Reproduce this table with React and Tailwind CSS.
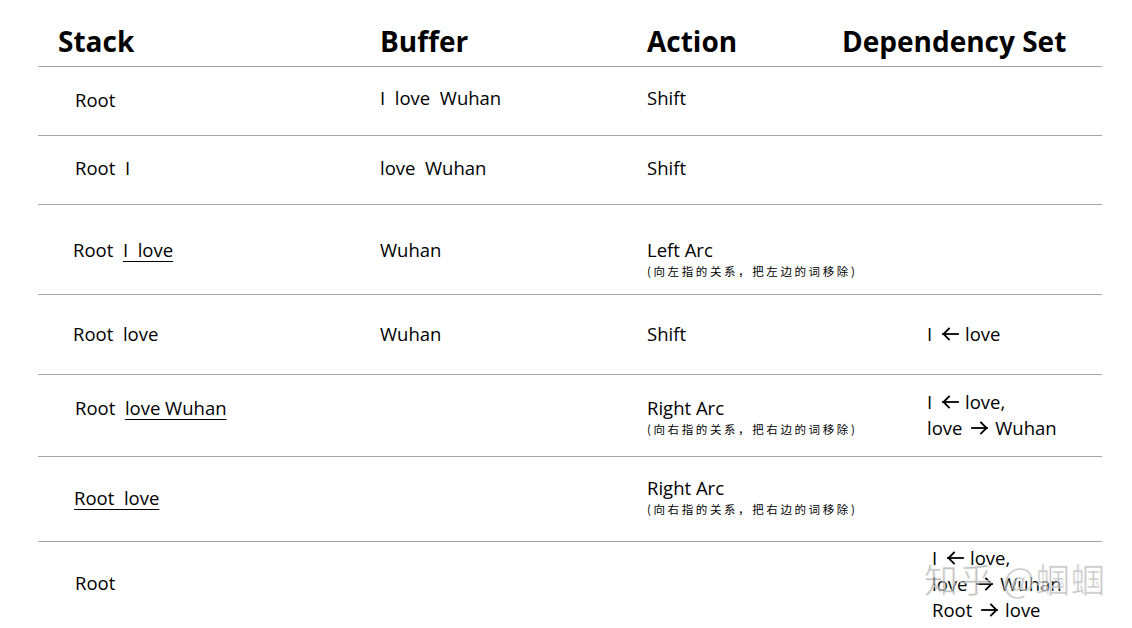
import React from "react";

const body = { fontFamily: '"Open Sans", "Noto Sans", sans-serif' };
const cjk = { fontFamily: '"Noto Sans CJK SC", "Noto Sans", sans-serif' };

function Note({ children }) {
  return (
    <div className="text-[11.5px] leading-[16px] tracking-[2.6px] text-black" style={cjk}>
      {children}
    </div>
  );
}

function Arrow({ dir }) {
  return (
    <svg
      width="18"
      height="14"
      viewBox="0 0 18 14"
      className="inline-block ml-[4px] mr-[6px] align-baseline"
      fill="none"
      stroke="black"
      strokeWidth="1.8"
      strokeLinecap="square"
    >
      {dir === "left" ? (
        <>
          <path d="M2 7 H17" />
          <path d="M8 1.5 L2.5 7 L8 12.5" />
        </>
      ) : (
        <>
          <path d="M1 7 H16" />
          <path d="M10 1.5 L15.5 7 L10 12.5" />
        </>
      )}
    </svg>
  );
}

export default function App() {
  return (
    <div className="w-[1132px] h-[628px] bg-white overflow-hidden relative text-black" style={body}>
      <div className="ml-[38px] w-[1064px]">
        {/* header */}
        <div className="h-[67px] border-b border-[#a6a6a6] grid grid-cols-[322px_267px_195px_1fr] pl-[20px] pt-[25px] text-[28px] leading-[32px] font-bold">
          <div>Stack</div>
          <div>Buffer</div>
          <div>Action</div>
          <div>Dependency Set</div>
        </div>

        {/* row 1 */}
        <div className="h-[69px] border-b border-[#a6a6a6] grid grid-cols-[342px_267px_280px_1fr] text-[18.5px] leading-[26px]">
          <div className="pl-[37px] pt-[20px]">Root</div>
          <div className="pt-[18px] whitespace-pre">I  love  Wuhan</div>
          <div className="pt-[18px]">Shift</div>
          <div></div>
        </div>

        {/* row 2 */}
        <div className="h-[69px] border-b border-[#a6a6a6] grid grid-cols-[342px_267px_280px_1fr] text-[18.5px] leading-[26px]">
          <div className="pl-[37px] pt-[19px] whitespace-pre">Root  I</div>
          <div className="pt-[19px] whitespace-pre">love  Wuhan</div>
          <div className="pt-[19px]">Shift</div>
          <div></div>
        </div>

        {/* row 3 */}
        <div className="h-[90px] border-b border-[#a6a6a6] grid grid-cols-[342px_267px_280px_1fr] text-[18.5px] leading-[26px]">
          <div className="pl-[35px] pt-[32px] whitespace-pre">
            Root  <span className="underline underline-offset-[4px] decoration-1">I  love</span>
          </div>
          <div className="pt-[32px]">Wuhan</div>
          <div className="pt-[32px]">
            <div>Left Arc</div>
            <Note>(向左指的关系，把左边的词移除)</Note>
          </div>
          <div></div>
        </div>

        {/* row 4 */}
        <div className="h-[80px] border-b border-[#a6a6a6] grid grid-cols-[342px_267px_280px_1fr] text-[18.5px] leading-[26px]">
          <div className="pl-[35px] pt-[26px] whitespace-pre">Root  love</div>
          <div className="pt-[26px]">Wuhan</div>
          <div className="pt-[26px]">Shift</div>
          <div className="pt-[26px] whitespace-pre">
            I <Arrow dir="left" />love
          </div>
        </div>

        {/* row 5 */}
        <div className="h-[82px] border-b border-[#a6a6a6] grid grid-cols-[342px_267px_280px_1fr] text-[18.5px] leading-[26px]">
          <div className="pl-[37px] pt-[20px] whitespace-pre">
            Root  <span className="underline underline-offset-[4px] decoration-1">love Wuhan</span>
          </div>
          <div></div>
          <div className="pt-[20px]">
            <div>Right Arc</div>
            <Note>(向右指的关系，把右边的词移除)</Note>
          </div>
          <div className="pt-[14px] whitespace-pre">
            <div>
              I <Arrow dir="left" />love,
            </div>
            <div>
              love <Arrow dir="right" />Wuhan
            </div>
          </div>
        </div>

        {/* row 6 */}
        <div className="h-[85px] border-b border-[#a6a6a6] grid grid-cols-[342px_267px_280px_1fr] text-[18.5px] leading-[26px]">
          <div className="pl-[36px] pt-[28px] whitespace-pre">
            <span className="underline underline-offset-[4px] decoration-1">Root  love</span>
          </div>
          <div></div>
          <div className="pt-[18px]">
            <div>Right Arc</div>
            <Note>(向右指的关系，把右边的词移除)</Note>
          </div>
          <div></div>
        </div>

        {/* row 7 */}
        <div className="h-[86px] grid grid-cols-[342px_267px_280px_1fr] text-[18.5px] leading-[26px]">
          <div className="pl-[37px] pt-[28px]">Root</div>
          <div></div>
          <div></div>
          <div className="pl-[5px] pt-[3px] whitespace-pre">
            <div>
              I <Arrow dir="left" />love,
            </div>
            <div>
              love <Arrow dir="right" />Wuhan
            </div>
            <div>
              Root <Arrow dir="right" />love
            </div>
          </div>
        </div>
      </div>

      {/* watermark */}
      <div
        className="absolute left-[924px] top-[558px] text-[34px] leading-[42px] text-[#9a9a9a]/60 whitespace-pre tracking-[1px]"
        style={{ fontFamily: '"Noto Sans CJK SC", sans-serif', WebkitTextStroke: "1px rgba(255,255,255,0.6)" }}
      >
        知乎 @蝈蝈
      </div>
    </div>
  );
}
